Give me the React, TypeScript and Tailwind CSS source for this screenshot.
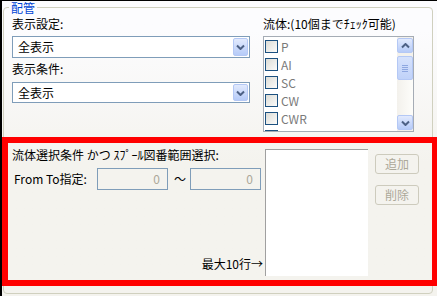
import React from 'react';

const FONT = { fontFamily: '"MS UI Gothic", "Noto Sans CJK JP", "Liberation Sans", sans-serif' };

const FLUIDS = ['P', 'AI', 'SC', 'CW', 'CWR'];

const Chevron = ({ up = false }: { up?: boolean }) => (
  <svg width="9" height="6" viewBox="0 0 9 6" className={up ? 'rotate-180' : ''}>
    <path d="M1 1.5 L4.5 5 L8 1.5" fill="none" stroke="#4d6185" strokeWidth="2" />
  </svg>
);

const XpSelect = ({ height }: { height: string }) => (
  <div className={`flex ${height} w-[238px] border border-[#7f9db9] bg-white p-px`}>
    <div className="flex flex-1 items-center pl-[4px] text-black">全表示</div>
    <div className="flex w-[15px] items-center justify-center rounded-[2px] border border-[#b4c8f5] bg-linear-to-b from-[#e2eafd] to-[#b6cbf8]">
      <Chevron />
    </div>
  </div>
);

const Checkbox = () => (
  <div className="h-[13px] w-[13px] shrink-0 border border-[#1c5180] bg-linear-to-br from-[#dcdcd6] to-[#fbfbfa]" />
);

const XpInput = () => (
  <div className="flex h-[22px] w-[71px] items-center justify-end border border-[#7f9db9] bg-[#f4f3ee] pr-[7px] text-[#aca899]">
    0
  </div>
);

const XpButton = ({ label }: { label: string }) => (
  <div className="flex h-[20px] w-[44px] items-center justify-center rounded-[3px] border border-[#cdcbbd] bg-[#f4f3ee] text-[#aca899]">
    {label}
  </div>
);

export default function App() {
  return (
    <div
      className="relative h-[296px] w-[437px] overflow-hidden border-l-2 border-t border-black bg-linear-to-b from-[#fcfcfe] from-10% to-[#f4f3ee] to-55% pl-px pt-[6px] pr-[4px] pb-[2px] text-[12px] leading-[14px] text-black"
      style={FONT}
    >
      <div className="relative h-full rounded-[4px] border border-[#d0d0bf] pl-[8px] pt-[9px]">
        <div className="absolute left-[5px] top-[-7px] bg-[#fcfcfe] px-[2px] text-[12px] leading-[14px] text-[#0046d5]">配管</div>

        <div className="flex items-start">
          <div className="flex w-[238px] flex-col">
            <div>表示設定:</div>
            <div className="mt-[5px]"><XpSelect height="h-[22px]" /></div>
            <div className="mt-[4px]">表示条件:</div>
            <div className="mt-[6px]"><XpSelect height="h-[21px]" /></div>
          </div>

          <div className="ml-[13px] flex w-[151px] flex-col">
            <div>流体:(10個までﾁｪｯｸ可能)</div>
            <div className="mt-[5px] flex h-[96px] border border-[#a5acb5] bg-white">
              <div className="flex flex-1 flex-col gap-[5px] overflow-hidden pl-px pt-[3px] text-[#7a7a7a]">
                {FLUIDS.map((f) => (
                  <div key={f} className="flex h-[13px] items-center gap-[3px]">
                    <Checkbox />
                    <span>{f}</span>
                  </div>
                ))}
                <div className="flex h-[13px] shrink-0 items-center">
                  <Checkbox />
                </div>
              </div>
              <div className="flex w-[16px] flex-col bg-[#f3f1ec] py-px">
                <div className="flex h-[15px] items-center justify-center rounded-[2px] border border-[#b4c8f5] bg-linear-to-b from-[#e2eafd] to-[#b6cbf8]">
                  <Chevron up />
                </div>
                <div className="mt-[3px] flex h-[24px] flex-col items-center justify-center gap-px rounded-[2px] border border-[#b4c8f5] bg-linear-to-b from-[#d6e2fc] to-[#c0d2f9]">
                  <div className="h-px w-[6px] bg-[#8ea7e0]" />
                  <div className="h-px w-[6px] bg-[#8ea7e0]" />
                  <div className="h-px w-[6px] bg-[#8ea7e0]" />
                  <div className="h-px w-[6px] bg-[#8ea7e0]" />
                </div>
                <div className="flex-1 bg-linear-to-r from-[#f3f1ec] to-[#fdfdfa]" />
                <div className="flex h-[15px] items-center justify-center rounded-[2px] border border-[#b4c8f5] bg-linear-to-b from-[#e2eafd] to-[#b6cbf8]">
                  <Chevron />
                </div>
              </div>
            </div>
          </div>
        </div>

        <div className="mt-[16px] flex items-start">
          <div className="flex h-[127px] w-[253px] flex-col">
            <div>流体選択条件 かつ ｽﾌﾟｰﾙ図番範囲選択:</div>
            <div className="mt-[6px] flex items-center">
              <span className="ml-[2px] w-[83px]">From To指定:</span>
              <XpInput />
              <span className="mx-[6px] w-[10px] text-center">〜</span>
              <XpInput />
            </div>
            <div className="mt-auto mb-[4px] self-end pr-[2px]">最大10行→</div>
          </div>
          <div className="mt-px h-[127px] w-[103px] border-l border-t border-[#a0a0a0] bg-white" />
          <div className="ml-[7px] mt-[6px] flex flex-col gap-[11px]">
            <XpButton label="追加" />
            <XpButton label="削除" />
          </div>
        </div>
      </div>

      <div className="absolute left-0 top-[136px] h-[149px] w-[437px] border-[6px] border-r-[7px] border-[#ff0000]" />
    </div>
  );
}
